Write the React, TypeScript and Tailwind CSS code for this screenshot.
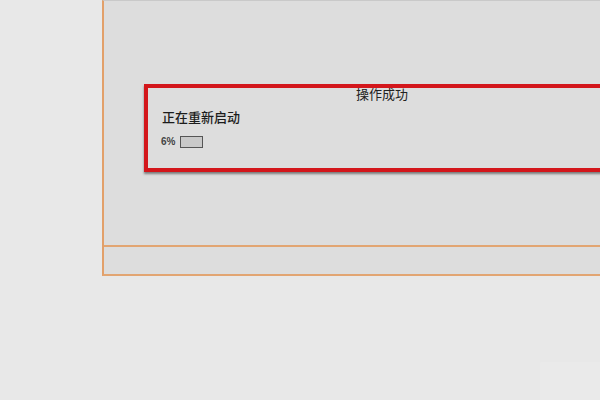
const cjk = "font-['Noto_Sans_CJK_SC','Liberation_Sans',sans-serif]";

function RestartNotice() {
  return (
    <div className="ml-[40px] flex h-[88px] w-[472px] flex-col border-4 border-[#d3161b] shadow-[0_2px_2px_rgba(60,60,60,0.6)]">
      <p className={`${cjk} -mt-[2px] pl-[4px] text-center text-[13px] leading-[15px] text-[#222]`}>操作成功</p>
      <p className={`${cjk} mt-[8px] ml-[14px] text-[13px] leading-[15px] font-medium text-[#1c1c1c]`}>正在重新启动</p>
      <div className="mt-[12px] ml-[13px] flex items-center gap-[5px]">
        <span className="font-['Liberation_Sans',sans-serif] text-[10px] leading-[10px] font-bold text-[#444]">6%</span>
        <div className="h-[12px] w-[23px] border border-[#555] bg-[#c9c9c9]" />
      </div>
    </div>
  );
}

export default function App() {
  return (
    <div className="relative h-[400px] w-[600px] overflow-hidden bg-[#e8e8e8]">
      <div className="ml-[102px] flex h-[276px] w-[520px] flex-col border-t border-b-2 border-l-2 border-t-[#c9c9c9] border-b-[#e2a572] border-l-[#e2a06a] bg-[#dddddd]">
        <div className="h-[246px] border-b-2 border-[#e2a572] pt-[83px]">
          <RestartNotice />
        </div>
      </div>
      <div className="absolute top-[362px] left-[540px] h-[40px] w-[70px] rounded-[2px] bg-[#eaeaea]" />
    </div>
  );
}
